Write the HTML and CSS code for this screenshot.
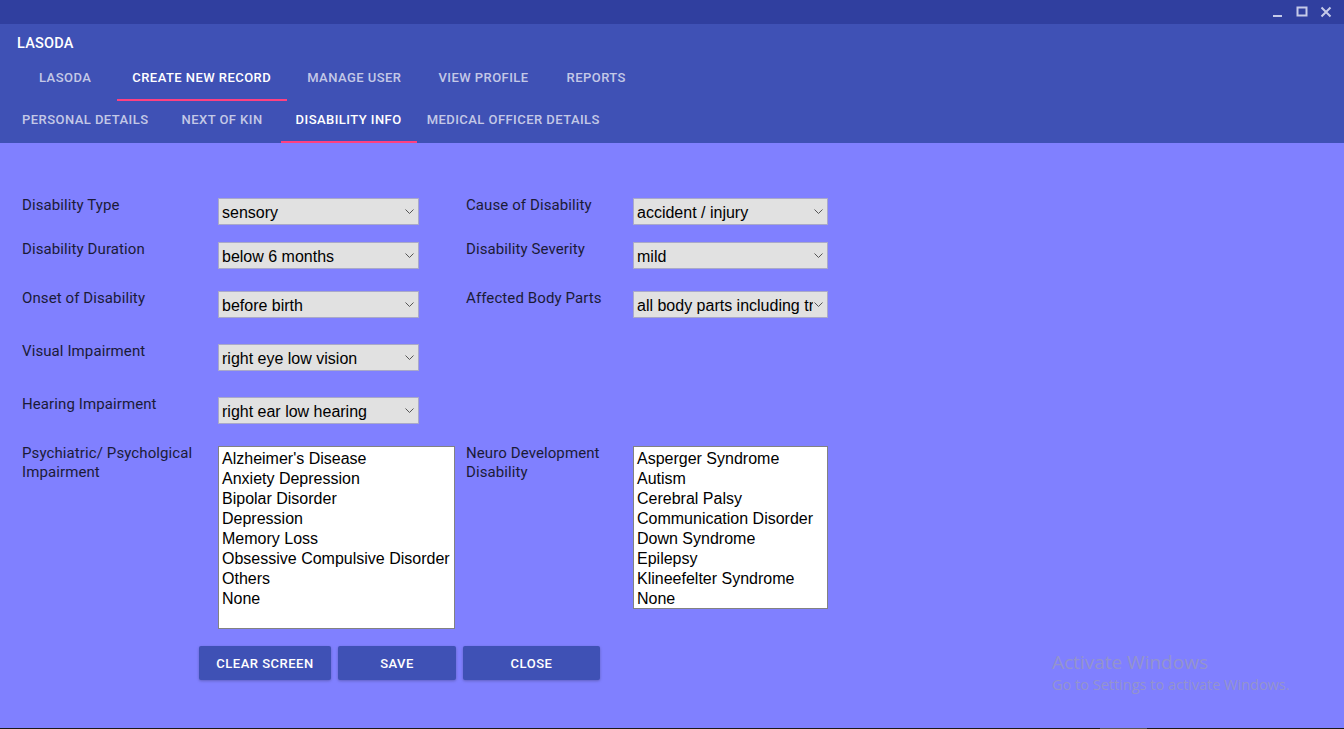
FILE: index.html
```html
<!DOCTYPE html>
<html>
<head>
<meta charset="utf-8">
<link rel="stylesheet" href="styles.css">
</head>
<body>
<div class="app">
  <div class="titlebar">
    <div class="winctrls">
      <svg width="12" height="12" viewBox="0 0 12 12"><rect x="1" y="9" width="9" height="2" fill="#c5cae9"/></svg>
      <svg width="12" height="12" viewBox="0 0 12 12"><rect x="1.5" y="1.5" width="9" height="8" fill="none" stroke="#c5cae9" stroke-width="2"/></svg>
      <svg width="12" height="12" viewBox="0 0 12 12"><path d="M1.5 1.5 L10.5 10.5 M10.5 1.5 L1.5 10.5" stroke="#c5cae9" stroke-width="2"/></svg>
    </div>
  </div>
  <header class="header">
    <div class="apptitle">LASODA</div>
    <nav class="tabs tabs-main">
      <div class="tab">LASODA</div>
      <div class="tab active t-create">CREATE NEW RECORD</div>
      <div class="tab t-manage">MANAGE USER</div>
      <div class="tab t-view">VIEW PROFILE</div>
      <div class="tab t-reports">REPORTS</div>
    </nav>
    <nav class="tabs tabs-sub">
      <div class="tab t-personal">PERSONAL DETAILS</div>
      <div class="tab t-kin">NEXT OF KIN</div>
      <div class="tab active t-dis">DISABILITY INFO</div>
      <div class="tab t-med">MEDICAL OFFICER DETAILS</div>
    </nav>
  </header>
  <main class="content">
    <div class="form">
      <div class="label r1">Disability Type</div>
      <div class="ctl r1"><div class="sel w201"><span>sensory</span><svg class="chev" width="9" height="5" viewBox="0 0 9 5"><path d="M0.5 0.5 L4.5 4.5 L8.5 0.5" fill="none" stroke="#555" stroke-width="1"/></svg></div></div>
      <div class="label r1">Cause of Disability</div>
      <div class="ctl r1"><div class="sel w195"><span>accident / injury</span><svg class="chev" width="9" height="5" viewBox="0 0 9 5"><path d="M0.5 0.5 L4.5 4.5 L8.5 0.5" fill="none" stroke="#555" stroke-width="1"/></svg></div></div>

      <div class="label r2">Disability Duration</div>
      <div class="ctl r2"><div class="sel w201"><span>below 6 months</span><svg class="chev" width="9" height="5" viewBox="0 0 9 5"><path d="M0.5 0.5 L4.5 4.5 L8.5 0.5" fill="none" stroke="#555" stroke-width="1"/></svg></div></div>
      <div class="label r2">Disability Severity</div>
      <div class="ctl r2"><div class="sel w195"><span>mild</span><svg class="chev" width="9" height="5" viewBox="0 0 9 5"><path d="M0.5 0.5 L4.5 4.5 L8.5 0.5" fill="none" stroke="#555" stroke-width="1"/></svg></div></div>

      <div class="label r3">Onset of Disability</div>
      <div class="ctl r3"><div class="sel w201"><span>before birth</span><svg class="chev" width="9" height="5" viewBox="0 0 9 5"><path d="M0.5 0.5 L4.5 4.5 L8.5 0.5" fill="none" stroke="#555" stroke-width="1"/></svg></div></div>
      <div class="label r3">Affected Body Parts</div>
      <div class="ctl r3"><div class="sel w195"><span class="clip">all body parts including tr</span><svg class="chev" width="9" height="5" viewBox="0 0 9 5"><path d="M0.5 0.5 L4.5 4.5 L8.5 0.5" fill="none" stroke="#555" stroke-width="1"/></svg></div></div>

      <div class="label r4">Visual Impairment</div>
      <div class="ctl r4"><div class="sel w201"><span>right eye low vision</span><svg class="chev" width="9" height="5" viewBox="0 0 9 5"><path d="M0.5 0.5 L4.5 4.5 L8.5 0.5" fill="none" stroke="#555" stroke-width="1"/></svg></div></div>
      <div class="r4 empty"></div>
      <div class="r4 empty"></div>

      <div class="label r5">Hearing Impairment</div>
      <div class="ctl r5"><div class="sel w201"><span>right ear low hearing</span><svg class="chev" width="9" height="5" viewBox="0 0 9 5"><path d="M0.5 0.5 L4.5 4.5 L8.5 0.5" fill="none" stroke="#555" stroke-width="1"/></svg></div></div>
      <div class="r5 empty"></div>
      <div class="r5 empty"></div>

      <div class="label r6">Psychiatric/ Psycholgical<br>Impairment</div>
      <div class="ctl r6">
        <div class="listbox lb-psy">
          <div>Alzheimer's Disease</div>
          <div>Anxiety Depression</div>
          <div>Bipolar Disorder</div>
          <div>Depression</div>
          <div>Memory Loss</div>
          <div>Obsessive Compulsive Disorder</div>
          <div>Others</div>
          <div>None</div>
        </div>
      </div>
      <div class="label r6">Neuro Development<br>Disability</div>
      <div class="ctl r6">
        <div class="listbox lb-neuro">
          <div>Asperger Syndrome</div>
          <div>Autism</div>
          <div>Cerebral Palsy</div>
          <div>Communication Disorder</div>
          <div>Down Syndrome</div>
          <div>Epilepsy</div>
          <div>Klineefelter Syndrome</div>
          <div>None</div>
        </div>
      </div>
    </div>
    <div class="actions">
      <button class="btn b-clear">CLEAR SCREEN</button>
      <button class="btn b-save">SAVE</button>
      <button class="btn b-close">CLOSE</button>
    </div>
    <div class="watermark">
      <div class="wm1">Activate Windows</div>
      <div class="wm2">Go to Settings to activate Windows.</div>
    </div>
  </main>
  <div class="taskline"><span class="seg"></span></div>
</div>
</body>
</html>
```
FILE: styles.css
```css
* { box-sizing: border-box; }
html, body { margin: 0; padding: 0; }
body {
  width: 1344px;
  height: 729px;
  overflow: hidden;
  font-family: Roboto, "Liberation Sans", sans-serif;
  background: #8080ff;
}
.app {
  display: flex;
  flex-direction: column;
  height: 729px;
}
.titlebar {
  height: 24px;
  background: #303f9f;
  display: flex;
  justify-content: flex-end;
  align-items: center;
}
.winctrls {
  display: flex;
  gap: 12px;
  padding-right: 12px;
}
.header {
  background: #3f51b5;
  height: 119px;
  display: flex;
  flex-direction: column;
}
.apptitle {
  color: #fff;
  font-weight: 500;
  font-size: 14.5px;
  padding: 11px 0 0 17px;
  height: 36px;
  letter-spacing: 0.2px;
}
.tabs {
  display: flex;
}
.tab {
  color: rgba(255,255,255,0.7);
  font-size: 13px;
  font-weight: 500;
  letter-spacing: 0.45px;
  text-transform: uppercase;
  display: flex;
  align-items: center;
  justify-content: center;
  border-bottom: 2px solid transparent;
  white-space: nowrap;
}
.tab.active {
  color: #fff;
  border-bottom-color: #ff4081;
}
.tabs-main {
  height: 41px;
  padding-left: 23px;
  gap: 6px;
}
.tabs-main .tab {
  padding: 0 16px 4px;
}
.tabs-main .t-create { margin-left: 4px; padding: 0 16px 4px 15px; }
.tabs-main .t-manage { margin-left: -2px; }
.tabs-main .t-view { margin-left: -1px; }
.tabs-sub {
  height: 42px;
  padding-left: 6px;
}
.tabs-sub .tab {
  padding: 0 16px 4px;
}
.tabs-sub .t-kin { margin-left: 1px; }
.tabs-sub .t-dis { margin-left: 2px; padding: 0 15px 4px; }
.tabs-sub .t-med { margin-left: -6px; }

.content {
  flex: 1;
  background: #8080ff;
  position: relative;
  padding: 55px 0 0 22px;
}
.form {
  display: grid;
  grid-template-columns: 196px 248px 167px 195px;
  grid-template-rows: 44px 49px 53px 53px 49px auto;
}
.label {
  font-size: 15px;
  color: #1b1b38;
  line-height: 19px;
  margin-top: -2px;
  letter-spacing: 0.1px;
}
.sel {
  position: relative;
  height: 27px;
  background: #e1e1e1;
  border: 1px solid #a9a9c9;
  font-family: "Liberation Sans", Arial, sans-serif;
  font-size: 16px;
  color: #000;
  display: flex;
  align-items: center;
  padding-left: 3px;
  padding-top: 2px;
  overflow: hidden;
  white-space: nowrap;
}
.sel span {
  overflow: hidden;
  flex: 1;
  margin-right: 18px;
}
.sel span.clip { margin-right: 14px; }
.w201 { width: 201px; }
.w195 { width: 195px; }
.chev {
  position: absolute;
  right: 4px;
  top: 10px;
}
.listbox {
  background: #fff;
  border: 1px solid #828282;
  font-family: "Liberation Sans", Arial, sans-serif;
  font-size: 16px;
  line-height: 20px;
  color: #000;
  padding: 2px 3px;
}
.lb-psy { width: 237px; height: 183px; }
.lb-neuro { width: 195px; height: 163px; }

.actions {
  display: flex;
  gap: 7px;
  margin: 17px 0 0 177px;
}
.btn {
  height: 34px;
  background: #3f51b5;
  color: #fff;
  border: none;
  border-radius: 2px;
  font-family: Roboto, "Liberation Sans", sans-serif;
  font-size: 13px;
  font-weight: 500;
  letter-spacing: 0.5px;
  box-shadow: 0 1px 3px rgba(0,0,0,0.25);
  padding: 0;
}
.b-clear { width: 132px; }
.b-save { width: 118px; }
.b-close { width: 137px; }

.watermark {
  position: absolute;
  left: 1052px;
  top: 507px;
  color: #9494cc;
  font-family: "Open Sans", "Noto Sans", sans-serif;
}
.wm1 { font-size: 19px; line-height: 24px; }
.wm2 { font-size: 14.5px; line-height: 22px; }
.taskline {
  height: 1px;
  background: #1a1a1a;
  position: relative;
}
.seg {
  position: absolute;
  left: 1100px;
  width: 47px;
  height: 1px;
  background: #555;
}
```
